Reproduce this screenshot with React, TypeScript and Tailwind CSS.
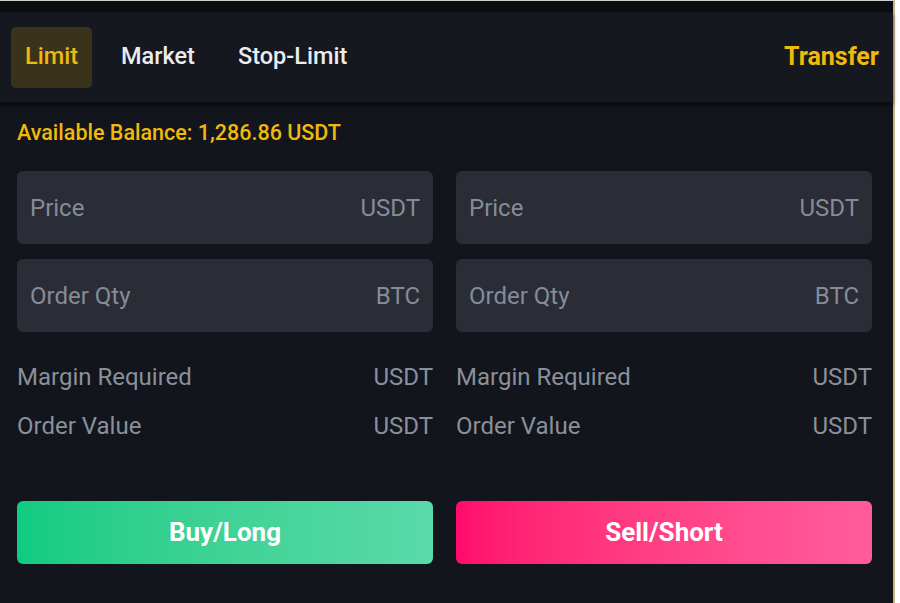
const font = { fontFamily: "Roboto, 'Noto Sans', sans-serif" };

const tabs = ['Limit', 'Market', 'Stop-Limit'];

const Field = ({ label, unit }: { label: string; unit: string }) => (
  <div className="h-[73px] rounded-[6px] bg-[#2a2d35] flex items-center justify-between px-[13px] text-[24px] text-[#858c98]">
    <span>{label}</span>
    <span>{unit}</span>
  </div>
);

const InfoRow = ({ label, unit }: { label: string; unit: string }) => (
  <div className="h-[49px] flex items-center justify-between text-[24px] text-[#8a909b]">
    <span>{label}</span>
    <span>{unit}</span>
  </div>
);

const OrderColumn = ({ side }: { side: 'buy' | 'sell' }) => (
  <div className="flex flex-col">
    <div className="flex flex-col gap-[15px]">
      <Field label="Price" unit="USDT" />
      <Field label="Order Qty" unit="BTC" />
    </div>

    <div className="mt-[20px]">
      <InfoRow label="Margin Required" unit="USDT" />
      <InfoRow label="Order Value" unit="USDT" />
    </div>

    {side === 'buy' ? (
      <button className="mt-[51px] h-[63px] rounded-[6px] bg-gradient-to-r from-[#0ecb81] to-[#5ad9aa] text-white text-[26px] font-bold">
        Buy/Long
      </button>
    ) : (
      <button className="mt-[51px] h-[63px] rounded-[6px] bg-gradient-to-r from-[#ff0a6c] to-[#ff5c9d] text-white text-[26px] font-bold">
        Sell/Short
      </button>
    )}
  </div>
);

export default function App() {
  return (
    <div className="w-[900px] h-[603px] bg-white" style={font}>
      <div className="w-[895px] h-full flex flex-col bg-[#12151b] border-t border-[#cfcfcf] border-r-2 border-r-[#c8b28c]">
        <div className="h-[11px] bg-[#0b0e11]" />

        <header className="relative z-10 h-[90px] flex items-center justify-between pl-[11px] pr-[14px] bg-[#15181f] shadow-[0_3px_4px_rgba(0,0,0,0.55)]">
          <nav className="flex items-center gap-[15px]">
            {tabs.map((tab, i) => (
              <button
                key={tab}
                className={
                  i === 0
                    ? 'h-[61px] px-[14px] rounded-[5px] bg-[#3a331c] text-[#f0b90b] text-[23.5px] font-medium'
                    : 'h-[61px] px-[14px] rounded-[5px] text-[#eaecef] text-[23.5px] font-medium'
                }
              >
                {tab}
              </button>
            ))}
          </nav>
          <button className="text-[#f0b90b] text-[25px] font-bold">Transfer</button>
        </header>

        <main className="flex-1 px-[17px] pt-[16px]">
          <p className="h-[30px] leading-[30px] text-[21.5px] font-medium text-[#f0b90b]">
            Available Balance: 1,286.86 USDT
          </p>

          <div className="mt-[23px] w-[855px] grid grid-cols-2 gap-x-[23px]">
            <OrderColumn side="buy" />
            <OrderColumn side="sell" />
          </div>
        </main>
      </div>
    </div>
  );
}
